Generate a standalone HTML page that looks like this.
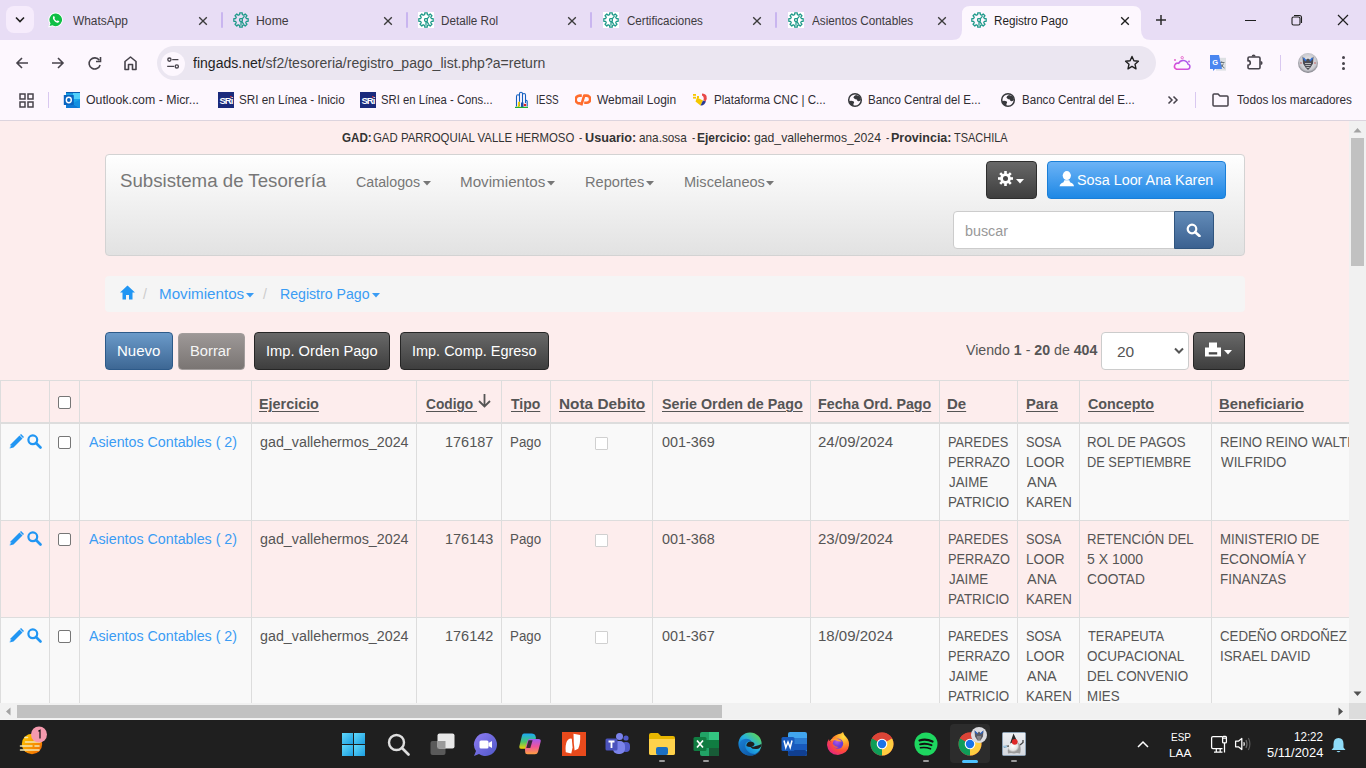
<!DOCTYPE html>
<html><head><meta charset='utf-8'><style>
html,body{margin:0;padding:0;width:1366px;height:768px;overflow:hidden;background:#fdeded;font-family:"Liberation Sans", sans-serif;}
div,svg,span.t{position:absolute;}
span.t{white-space:pre;line-height:normal;}
</style></head><body>
<div style='left:0px;top:0px;width:1366px;height:40px;background:#e8ddf5'></div><div style='left:6px;top:6px;width:28px;height:27px;background:#f6ecfc;border-radius:8px'></div><svg style='position:absolute;left:15px;top:16px;' width='10' height='7' viewBox='0 0 10 7'><path d='M1 1.5 L5 5.5 L9 1.5' fill='none' stroke='#1f1f1f' stroke-width='1.6'/></svg><span class='t' style='left:72.8px;top:14px;font-size:12px;color:#3d3a40;font-weight:400;font-family:"Liberation Sans";transform:scaleX(0.9909);transform-origin:0 0;'>WhatsApp</span><svg style='position:absolute;left:197.8px;top:15.5px;' width='10' height='10' viewBox='0 0 10 10'><path d='M1.2 1.2L8.8 8.8M8.8 1.2L1.2 8.8' stroke='#3b3b3b' stroke-width='1.35'/></svg><div style='left:221px;top:12px;width:2px;height:16px;background:#c9b5ef;border-radius:1px'></div><span class='t' style='left:256.48px;top:14px;font-size:12px;color:#3d3a40;font-weight:400;font-family:"Liberation Sans";transform:scaleX(1.0194);transform-origin:0 0;'>Home</span><svg style='position:absolute;left:382.5px;top:15.5px;' width='10' height='10' viewBox='0 0 10 10'><path d='M1.2 1.2L8.8 8.8M8.8 1.2L1.2 8.8' stroke='#3b3b3b' stroke-width='1.35'/></svg><div style='left:406px;top:12px;width:2px;height:16px;background:#c9b5ef;border-radius:1px'></div><span class='t' style='left:441.23px;top:14px;font-size:12px;color:#3d3a40;font-weight:400;font-family:"Liberation Sans";transform:scaleX(0.9737);transform-origin:0 0;'>Detalle Rol</span><svg style='position:absolute;left:567.2px;top:15.5px;' width='10' height='10' viewBox='0 0 10 10'><path d='M1.2 1.2L8.8 8.8M8.8 1.2L1.2 8.8' stroke='#3b3b3b' stroke-width='1.35'/></svg><div style='left:590px;top:12px;width:2px;height:16px;background:#c9b5ef;border-radius:1px'></div><span class='t' style='left:626.9px;top:14px;font-size:12px;color:#3d3a40;font-weight:400;font-family:"Liberation Sans";transform:scaleX(0.9646);transform-origin:0 0;'>Certificaciones</span><svg style='position:absolute;left:751.9px;top:15.5px;' width='10' height='10' viewBox='0 0 10 10'><path d='M1.2 1.2L8.8 8.8M8.8 1.2L1.2 8.8' stroke='#3b3b3b' stroke-width='1.35'/></svg><div style='left:775px;top:12px;width:2px;height:16px;background:#c9b5ef;border-radius:1px'></div><span class='t' style='left:811.6px;top:14px;font-size:12px;color:#3d3a40;font-weight:400;font-family:"Liberation Sans";transform:scaleX(0.9786);transform-origin:0 0;'>Asientos Contables</span><svg style='position:absolute;left:936.6px;top:15.5px;' width='10' height='10' viewBox='0 0 10 10'><path d='M1.2 1.2L8.8 8.8M8.8 1.2L1.2 8.8' stroke='#3b3b3b' stroke-width='1.35'/></svg><svg style='position:absolute;left:48px;top:12px;' width='16' height='16' viewBox='0 0 16 16'><path d='M8 0.6A7.2 7.2 0 1 1 4.3 14.2L0.2 15.4L1.5 11.6A7.2 7.2 0 0 1 8 0.6Z' fill='#fff'/><path d='M8 1.5A6.3 6.3 0 1 1 4.5 13.2L1.6 14.1L2.5 11.3A6.3 6.3 0 0 1 8 1.5Z' fill='#0fbf45'/><path d='M5.3 4.4c.3-.4.8-.4 1 0l.6 1.3c.1.3-.2.7-.5 1 .5 1 1.3 1.8 2.3 2.3.3-.3.7-.6 1-.5l1.3.6c.4.2.4.7 0 1-.7.7-1.5.8-2.4.4-1.6-.7-2.8-1.9-3.5-3.5-.4-.9-.3-1.8.2-2.6z' fill='#fff'/></svg><svg style='position:absolute;left:233px;top:12px;' width='16' height='16' viewBox='0 0 16 16'><g fill='none' stroke='#1f9a8a' stroke-width='1.25' stroke-linejoin='round'><path d='M5.90 2.92L6.67 2.66L6.73 0.81L9.27 0.81L9.33 2.66L10.10 2.92L10.83 3.29L12.19 2.02L13.98 3.81L12.71 5.17L13.08 5.90L13.34 6.67L15.19 6.73L15.19 9.27L13.34 9.33L13.08 10.10L12.71 10.83L13.98 12.19L12.19 13.98L10.83 12.71L10.10 13.08L9.33 13.34L9.27 15.19L6.73 15.19L6.67 13.34L5.90 13.08L5.17 12.71L3.81 13.98L2.02 12.19L3.29 10.83L2.92 10.10L2.66 9.33L0.81 9.27L0.81 6.73L2.66 6.67L2.92 5.90L3.29 5.17L2.02 3.81L3.81 2.02L5.17 3.29Z'/><rect x='6.6' y='6.6' width='2.8' height='2.8' rx='0.8'/><path d='M9.2 6.8L11.5 4.2M8 9.4V13.4M8.8 9.3L10.6 12.2'/></g></svg><svg style='position:absolute;left:418px;top:12px;' width='16' height='16' viewBox='0 0 16 16'><rect x='0' y='0' width='16' height='16' fill='#fff'/><g fill='none' stroke='#1f9a8a' stroke-width='1.25' stroke-linejoin='round'><path d='M5.90 2.92L6.67 2.66L6.73 0.81L9.27 0.81L9.33 2.66L10.10 2.92L10.83 3.29L12.19 2.02L13.98 3.81L12.71 5.17L13.08 5.90L13.34 6.67L15.19 6.73L15.19 9.27L13.34 9.33L13.08 10.10L12.71 10.83L13.98 12.19L12.19 13.98L10.83 12.71L10.10 13.08L9.33 13.34L9.27 15.19L6.73 15.19L6.67 13.34L5.90 13.08L5.17 12.71L3.81 13.98L2.02 12.19L3.29 10.83L2.92 10.10L2.66 9.33L0.81 9.27L0.81 6.73L2.66 6.67L2.92 5.90L3.29 5.17L2.02 3.81L3.81 2.02L5.17 3.29Z'/><rect x='6.6' y='6.6' width='2.8' height='2.8' rx='0.8'/><path d='M9.2 6.8L11.5 4.2M8 9.4V13.4M8.8 9.3L10.6 12.2'/></g></svg><svg style='position:absolute;left:603px;top:12px;' width='16' height='16' viewBox='0 0 16 16'><rect x='0' y='0' width='16' height='16' fill='#fff'/><g fill='none' stroke='#1f9a8a' stroke-width='1.25' stroke-linejoin='round'><path d='M5.90 2.92L6.67 2.66L6.73 0.81L9.27 0.81L9.33 2.66L10.10 2.92L10.83 3.29L12.19 2.02L13.98 3.81L12.71 5.17L13.08 5.90L13.34 6.67L15.19 6.73L15.19 9.27L13.34 9.33L13.08 10.10L12.71 10.83L13.98 12.19L12.19 13.98L10.83 12.71L10.10 13.08L9.33 13.34L9.27 15.19L6.73 15.19L6.67 13.34L5.90 13.08L5.17 12.71L3.81 13.98L2.02 12.19L3.29 10.83L2.92 10.10L2.66 9.33L0.81 9.27L0.81 6.73L2.66 6.67L2.92 5.90L3.29 5.17L2.02 3.81L3.81 2.02L5.17 3.29Z'/><rect x='6.6' y='6.6' width='2.8' height='2.8' rx='0.8'/><path d='M9.2 6.8L11.5 4.2M8 9.4V13.4M8.8 9.3L10.6 12.2'/></g></svg><svg style='position:absolute;left:788px;top:12px;' width='16' height='16' viewBox='0 0 16 16'><rect x='0' y='0' width='16' height='16' fill='#fff'/><g fill='none' stroke='#1f9a8a' stroke-width='1.25' stroke-linejoin='round'><path d='M5.90 2.92L6.67 2.66L6.73 0.81L9.27 0.81L9.33 2.66L10.10 2.92L10.83 3.29L12.19 2.02L13.98 3.81L12.71 5.17L13.08 5.90L13.34 6.67L15.19 6.73L15.19 9.27L13.34 9.33L13.08 10.10L12.71 10.83L13.98 12.19L12.19 13.98L10.83 12.71L10.10 13.08L9.33 13.34L9.27 15.19L6.73 15.19L6.67 13.34L5.90 13.08L5.17 12.71L3.81 13.98L2.02 12.19L3.29 10.83L2.92 10.10L2.66 9.33L0.81 9.27L0.81 6.73L2.66 6.67L2.92 5.90L3.29 5.17L2.02 3.81L3.81 2.02L5.17 3.29Z'/><rect x='6.6' y='6.6' width='2.8' height='2.8' rx='0.8'/><path d='M9.2 6.8L11.5 4.2M8 9.4V13.4M8.8 9.3L10.6 12.2'/></g></svg><svg style='position:absolute;left:952px;top:6px' width='200' height='34' viewBox='0 0 200 34'><path d='M0 34 Q10 34 10 24 V8 Q10 0 18 0 H181 Q189 0 189 8 V24 Q189 34 199 34 Z' fill='#fdf7fe'/></svg><svg style='position:absolute;left:971px;top:12px;' width='16' height='16' viewBox='0 0 16 16'><g fill='none' stroke='#1f9a8a' stroke-width='1.25' stroke-linejoin='round'><path d='M5.90 2.92L6.67 2.66L6.73 0.81L9.27 0.81L9.33 2.66L10.10 2.92L10.83 3.29L12.19 2.02L13.98 3.81L12.71 5.17L13.08 5.90L13.34 6.67L15.19 6.73L15.19 9.27L13.34 9.33L13.08 10.10L12.71 10.83L13.98 12.19L12.19 13.98L10.83 12.71L10.10 13.08L9.33 13.34L9.27 15.19L6.73 15.19L6.67 13.34L5.90 13.08L5.17 12.71L3.81 13.98L2.02 12.19L3.29 10.83L2.92 10.10L2.66 9.33L0.81 9.27L0.81 6.73L2.66 6.67L2.92 5.90L3.29 5.17L2.02 3.81L3.81 2.02L5.17 3.29Z'/><rect x='6.6' y='6.6' width='2.8' height='2.8' rx='0.8'/><path d='M9.2 6.8L11.5 4.2M8 9.4V13.4M8.8 9.3L10.6 12.2'/></g></svg><span class='t' style='left:994.03px;top:14px;font-size:12px;color:#1f1f1f;font-weight:400;font-family:"Liberation Sans";transform:scaleX(0.9733);transform-origin:0 0;'>Registro Pago</span><svg style='position:absolute;left:1120px;top:15.5px;' width='10' height='10' viewBox='0 0 10 10'><path d='M1.2 1.2L8.8 8.8M8.8 1.2L1.2 8.8' stroke='#1f1f1f' stroke-width='1.35'/></svg><svg style='position:absolute;left:1155px;top:14px;' width='12' height='12' viewBox='0 0 12 12'><path d='M6 1V11M1 6H11' stroke='#2a2a2a' stroke-width='1.5'/></svg><div style='left:1245px;top:20px;width:11px;height:1px;background:#1f1f1f'></div><svg style='position:absolute;left:1291px;top:14px;' width='12' height='12' viewBox='0 0 12 12'><rect x='1' y='3' width='8' height='8' rx='1.5' fill='none' stroke='#1f1f1f' stroke-width='1.1'/><path d='M3 1.5H8.5A2 2 0 0 1 10.5 3.5V9' fill='none' stroke='#1f1f1f' stroke-width='1.1'/></svg><svg style='position:absolute;left:1337px;top:14px;' width='12' height='12' viewBox='0 0 12 12'><path d='M1 1L11 11M11 1L1 11' stroke='#1f1f1f' stroke-width='1.2'/></svg><div style='left:0px;top:40px;width:1366px;height:80px;background:#fdf7fe'></div><svg style='position:absolute;left:15px;top:56px;' width='14' height='14' viewBox='0 0 14 14'><path d='M13 7H2M7 2L2 7L7 12' fill='none' stroke='#47434b' stroke-width='1.6'/></svg><svg style='position:absolute;left:51px;top:56px;' width='14' height='14' viewBox='0 0 14 14'><path d='M1 7H12M7 2L12 7L7 12' fill='none' stroke='#47434b' stroke-width='1.6'/></svg><svg style='position:absolute;left:87px;top:56px;' width='15' height='15' viewBox='0 0 15 15'><path d='M12.3 4.2A5.6 5.6 0 1 0 13.1 9' fill='none' stroke='#47434b' stroke-width='1.6'/><path d='M13.5 1V5.5H9' fill='none' stroke='#47434b' stroke-width='1.6'/></svg><svg style='position:absolute;left:123px;top:55px;' width='15' height='16' viewBox='0 0 15 16'><path d='M2 14.5V6.5L7.5 2L13 6.5V14.5H9.5V9.5H5.5V14.5Z' fill='none' stroke='#47434b' stroke-width='1.6' stroke-linejoin='round'/></svg><div style='left:157px;top:46px;width:999px;height:34px;background:#ebe6f1;border-radius:17px'></div><div style='left:161px;top:52px;width:24px;height:24px;background:#fdf7fe;border-radius:12px'></div><svg style='position:absolute;left:166px;top:57px;' width='14' height='12' viewBox='0 0 14 12'><g fill='none' stroke='#47434b' stroke-width='1.35'><circle cx='3.4' cy='2.6' r='1.6'/><path d='M6.2 2.6H12.4M1.2 9.4H8.2'/><circle cx='10.8' cy='9.4' r='1.6'/></g></svg><span class='t' style='left:193.0px;top:55px;font-size:14px;color:#1f1f1f;font-weight:400;font-family:"Liberation Sans";transform:scaleX(1.0028);transform-origin:0 0;'><span style='color:#1f1f1f'>fingads.net</span><span style='color:#474747'>/sf2/tesoreria/registro_pago_list.php?a=return</span></span><svg style='position:absolute;left:1124px;top:55px;' width='16' height='16' viewBox='0 0 16 16'><path d='M8 1.5L9.9 5.8L14.4 6.2L11 9.2L12 13.8L8 11.4L4 13.8L5 9.2L1.6 6.2L6.1 5.8Z' fill='none' stroke='#1f1f1f' stroke-width='1.4' stroke-linejoin='round'/></svg><svg style='position:absolute;left:1172px;top:54px;' width='20' height='17' viewBox='0 0 20 17'><defs><linearGradient id='cg' x1='0' y1='1' x2='1' y2='0'><stop offset='0' stop-color='#e84ccf'/><stop offset='1' stop-color='#9d5cf2'/></linearGradient></defs><path d='M4.5 15.2H15.5A2.6 2.6 0 0 0 16 10.1A5 5 0 0 0 6.6 9.4A3 3 0 0 0 4.5 15.2Z' fill='none' stroke='url(#cg)' stroke-width='1.5'/><circle cx='10.2' cy='3.7' r='1.2' fill='none' stroke='#e45fc8' stroke-width='0.9'/><circle cx='3' cy='6' r='0.9' fill='#e255c8'/><circle cx='17' cy='7.5' r='0.9' fill='#c058e0'/></svg><svg style='position:absolute;left:1210px;top:55px;' width='17' height='16' viewBox='0 0 17 16'><rect x='6' y='2.8' width='10' height='12.8' fill='#dde0e3'/><path d='M9 7.5h5.5M11.7 6.3v1.2M10.3 8.6q1.5 3 4.3 4.5M13.4 8.6q-.9 3.2-3.6 4.6' stroke='#5f6b73' stroke-width='0.9' fill='none'/><path d='M0 0H9L12 14H5L3 16V14H0Z' fill='#4a86f0'/><text x='5.2' y='9.6' font-size='7.5' font-weight='700' fill='#fff' text-anchor='middle' font-family='Liberation Sans'>G</text></svg><svg style='position:absolute;left:1246px;top:54px;' width='18' height='17' viewBox='0 0 18 17'><path d='M3.2 3H12.8Q14 3 14 4.2V13.6Q14 14.8 12.8 14.8H3.2Q2 14.8 2 13.6V11.2A2.3 2.3 0 0 0 2 6.6V4.2Q2 3 3.2 3Z' fill='none' stroke='#47434b' stroke-width='1.6'/><path d='M5.6 2.6A2 2 0 0 1 9.6 2.6Z M14.6 6.9A2 2 0 0 1 14.6 10.9Z' fill='#47434b'/></svg><div style='left:1280px;top:55px;width:1px;height:16px;background:#d9c8f0'></div><svg style='position:absolute;left:1298px;top:53px;' width='20' height='20' viewBox='0 0 20 20'><defs><radialGradient id='av' cx='.5' cy='.45' r='.55'><stop offset='0' stop-color='#f2f2f4'/><stop offset='.75' stop-color='#c9c9cf'/><stop offset='1' stop-color='#7a7a82'/></radialGradient></defs><circle cx='10' cy='10' r='10' fill='url(#av)'/><path d='M4.5 3.5L7.5 7L10 5.5L12.5 7L15.5 3.5L15 10.5L12.5 14.5L10 17L7.5 14.5L5 10.5Z' fill='#4a4a52'/><path d='M5.5 5L8 8M14.5 5L12 8' stroke='#2f6fd8' stroke-width='1.6'/><path d='M7 10.5H13M7.5 12.5H12.5M8.5 14.5H11.5' stroke='#e8e8e8' stroke-width='0.7'/><circle cx='3' cy='10' r='0.7' fill='#c04040'/><circle cx='17' cy='10' r='0.7' fill='#c04040'/></svg><div style='left:1342px;top:56px;width:3px;height:3px;background:#47434b;border-radius:2px'></div><div style='left:1342px;top:62px;width:3px;height:3px;background:#47434b;border-radius:2px'></div><div style='left:1342px;top:67px;width:3px;height:3px;background:#47434b;border-radius:2px'></div><svg style='position:absolute;left:19px;top:93px;' width='15' height='15' viewBox='0 0 15 15'><g fill='none' stroke='#47434b' stroke-width='1.5'><rect x='1' y='1' width='5' height='5'/><rect x='9' y='1' width='5' height='5'/><rect x='1' y='9' width='5' height='5'/><rect x='9' y='9' width='5' height='5'/></g></svg><div style='left:48px;top:92px;width:1px;height:16px;background:#d9c8f0'></div><svg style='position:absolute;left:63px;top:91px;' width='18' height='18' viewBox='0 0 18 18'><rect x='3' y='1' width='14' height='16' fill='#1aa3e8'/><rect x='3' y='1' width='14' height='1.2' fill='#0a5cb0'/><rect x='10' y='2' width='7' height='6' fill='#50d0fa'/><path d='M3 9.5L17 17H3Z' fill='#0f78d4'/><path d='M17 8.5V17L9.5 12.5Z' fill='#1490e0'/><rect x='0.8' y='4' width='10' height='10' rx='0.6' fill='#0a64c0'/><ellipse cx='5.8' cy='9' rx='2.5' ry='2.7' fill='none' stroke='#fff' stroke-width='1.4'/></svg><span class='t' style='left:86.0px;top:93px;font-size:12px;color:#2f2c33;font-weight:400;font-family:"Liberation Sans";transform:scaleX(1.0275);transform-origin:0 0;'>Outlook.com - Micr...</span><svg style='position:absolute;left:218px;top:92px;' width='16' height='16' viewBox='0 0 16 16'><rect width='16' height='16' fill='#1a2a7c'/><text x='8' y='12' font-size='9.5' font-weight='700' fill='#fff' text-anchor='middle' font-family='Liberation Sans' letter-spacing='-0.9'>SRi</text><rect x='12.2' y='4' width='1.4' height='1.4' fill='#e03030'/></svg><svg style='position:absolute;left:360px;top:92px;' width='16' height='16' viewBox='0 0 16 16'><rect width='16' height='16' fill='#1a2a7c'/><text x='8' y='12' font-size='9.5' font-weight='700' fill='#fff' text-anchor='middle' font-family='Liberation Sans' letter-spacing='-0.9'>SRi</text><rect x='12.2' y='4' width='1.4' height='1.4' fill='#e03030'/></svg><span class='t' style='left:239.03px;top:93px;font-size:12px;color:#2f2c33;font-weight:400;font-family:"Liberation Sans";transform:scaleX(0.9720);transform-origin:0 0;'>SRI en Línea - Inicio</span><span class='t' style='left:381.06px;top:93px;font-size:12px;color:#2f2c33;font-weight:400;font-family:"Liberation Sans";transform:scaleX(0.9402);transform-origin:0 0;'>SRI en Línea - Cons...</span><svg style='position:absolute;left:515px;top:91px;' width='13' height='17' viewBox='0 0 13 17'><path d='M1.5 15.5V5.5Q1.5 3.8 3 3.8Q4.5 3.8 4.5 5.5V15 M4.5 5V2.8Q4.5 1.2 6 1.2Q7.5 1.2 7.5 2.8V12 M7.5 4Q7.5 2.5 9 2.5Q10.5 2.5 10.5 4V12 M10.5 10.5Q10.5 9.2 11.3 9.2Q12.2 9.2 12.2 10.5V15.5' fill='none' stroke='#1560c0' stroke-width='1.1'/><path d='M3 11L5 10.5L4.5 16H2.8Z' fill='#f5d000'/><path d='M6 11.5H8.5V16H6Z' fill='#1e50b0'/><circle cx='10' cy='14' r='1.3' fill='#e02020'/><rect x='0' y='15.8' width='13' height='1.2' fill='#22b030'/></svg><span class='t' style='left:536.17px;top:93px;font-size:12px;color:#2f2c33;font-weight:400;font-family:"Liberation Sans";transform:scaleX(0.8269);transform-origin:0 0;'>IESS</span><svg style='position:absolute;left:575px;top:93px;' width='16' height='13' viewBox='0 0 16 13'><path d='M6.8 2.6H4.6A3.9 3.9 0 0 0 4.6 10.4H5.8' fill='none' stroke='#ff6c2c' stroke-width='2.6'/><path d='M6.2 12.4L9.2 2.6H11.6A3.6 3.6 0 0 1 11.6 9.8H9.2' fill='none' stroke='#ff6c2c' stroke-width='2.6' stroke-linejoin='round'/></svg><span class='t' style='left:597.0px;top:93px;font-size:12px;color:#2f2c33;font-weight:400;font-family:"Liberation Sans";'>Webmail Login</span><svg style='position:absolute;left:692px;top:92px;' width='17' height='15' viewBox='0 0 17 15'><g fill='#f5c800'><rect x='1' y='2' width='3' height='1.8'/><rect x='1' y='4.8' width='3' height='1.8'/><rect x='5' y='4' width='2' height='2'/><path d='M5 5.5L11 8.5L8.5 13.5L3.5 9.5Z'/></g><path d='M10 1.5Q13.5 1.5 14.5 4Q15.5 7 13.5 9.5L11.5 8Q12.5 5 10 3.5Z' fill='#e84848'/><path d='M8.5 13.5L11 8.5L14 9.5L12.5 12Q10.5 14 8.5 13.5Z' fill='#2a3a90'/></svg><span class='t' style='left:714.04px;top:93px;font-size:12px;color:#2f2c33;font-weight:400;font-family:"Liberation Sans";transform:scaleX(0.9649);transform-origin:0 0;'>Plataforma CNC | C...</span><svg style='position:absolute;left:847px;top:92px;' width='16' height='16' viewBox='0 0 16 16'><circle cx='8' cy='8' r='6.3' fill='none' stroke='#37383c' stroke-width='1.5'/><path d='M6.4 5.6Q6.8 3.8 9 3L12.6 4.2L14 7.6Q13.2 9.6 11.3 9.3Q9.9 8.9 10 7.4Q8 7.8 6.4 5.6Z M1.8 9.2Q4.3 8.4 6.8 9.4Q7.6 10.4 6.6 11.4Q6 12.8 6.9 14.2L4 13Z' fill='#37383c'/></svg><span class='t' style='left:868.03px;top:93px;font-size:12px;color:#2f2c33;font-weight:400;font-family:"Liberation Sans";transform:scaleX(0.9652);transform-origin:0 0;'>Banco Central del E...</span><svg style='position:absolute;left:1000px;top:92px;' width='16' height='16' viewBox='0 0 16 16'><circle cx='8' cy='8' r='6.3' fill='none' stroke='#37383c' stroke-width='1.5'/><path d='M6.4 5.6Q6.8 3.8 9 3L12.6 4.2L14 7.6Q13.2 9.6 11.3 9.3Q9.9 8.9 10 7.4Q8 7.8 6.4 5.6Z M1.8 9.2Q4.3 8.4 6.8 9.4Q7.6 10.4 6.6 11.4Q6 12.8 6.9 14.2L4 13Z' fill='#37383c'/></svg><span class='t' style='left:1022.03px;top:93px;font-size:12px;color:#2f2c33;font-weight:400;font-family:"Liberation Sans";transform:scaleX(0.9652);transform-origin:0 0;'>Banco Central del E...</span><svg style='position:absolute;left:1167px;top:95px;' width='12' height='10' viewBox='0 0 12 10'><path d='M1.5 1.5L5 5L1.5 8.5M6.5 1.5L10 5L6.5 8.5' fill='none' stroke='#47434b' stroke-width='1.5'/></svg><div style='left:1195px;top:92px;width:1px;height:16px;background:#d9c8f0'></div><svg style='position:absolute;left:1212px;top:93px;' width='17' height='14' viewBox='0 0 17 14'><path d='M1 2Q1 1 2 1H6L8 3H15Q16 3 16 4V12Q16 13 15 13H2Q1 13 1 12Z' fill='none' stroke='#47434b' stroke-width='1.5'/></svg><span class='t' style='left:1237.0px;top:93px;font-size:12px;color:#2f2c33;font-weight:400;font-family:"Liberation Sans";transform:scaleX(0.9786);transform-origin:0 0;'>Todos los marcadores</span><div style='left:0px;top:120px;width:1366px;height:1px;background:#dcd4de'></div><div style='left:0px;top:121px;width:1349px;height:582px;background:#fdeded'></div><span class='t' style='left:341.5px;top:130px;font-size:13px;color:#333;font-weight:700;font-family:"Liberation Sans";transform:scaleX(0.8938);transform-origin:0 0;'>GAD:</span><span class='t' style='left:373.12px;top:130px;font-size:13px;color:#333;font-weight:400;font-family:"Liberation Sans";transform:scaleX(0.8772);transform-origin:0 0;'>GAD PARROQUIAL VALLE HERMOSO</span><span class='t' style='left:578.8px;top:130px;font-size:13px;color:#333;font-weight:400;font-family:"Liberation Sans";transform:scaleX(0.7500);transform-origin:0 0;'>-</span><span class='t' style='left:584.83px;top:130px;font-size:13px;color:#333;font-weight:700;font-family:"Liberation Sans";transform:scaleX(0.9725);transform-origin:0 0;'>Usuario:</span><span class='t' style='left:639.0px;top:130px;font-size:13px;color:#333;font-weight:400;font-family:"Liberation Sans";transform:scaleX(0.9057);transform-origin:0 0;'>ana.sosa</span><span class='t' style='left:691.6px;top:130px;font-size:13px;color:#333;font-weight:400;font-family:"Liberation Sans";transform:scaleX(0.7500);transform-origin:0 0;'>-</span><span class='t' style='left:697.38px;top:130px;font-size:13px;color:#333;font-weight:700;font-family:"Liberation Sans";transform:scaleX(0.9193);transform-origin:0 0;'>Ejercicio:</span><span class='t' style='left:754.2px;top:130px;font-size:13px;color:#333;font-weight:400;font-family:"Liberation Sans";transform:scaleX(0.9393);transform-origin:0 0;'>gad_vallehermos_2024</span><span class='t' style='left:885.6px;top:130px;font-size:13px;color:#333;font-weight:400;font-family:"Liberation Sans";transform:scaleX(0.7500);transform-origin:0 0;'>-</span><span class='t' style='left:891.04px;top:130px;font-size:13px;color:#333;font-weight:700;font-family:"Liberation Sans";transform:scaleX(0.9623);transform-origin:0 0;'>Provincia:</span><span class='t' style='left:954.0px;top:130px;font-size:13px;color:#333;font-weight:400;font-family:"Liberation Sans";transform:scaleX(0.8438);transform-origin:0 0;'>TSACHILA</span><div style='left:105px;top:154px;width:1138px;height:100px;border:1px solid #d3d3d3;border-radius:4px;background:linear-gradient(#ffffff 0%,#fcfcfc 8%,#e2e2e2 100%);box-shadow:inset 0 1px 0 rgba(255,255,255,.8)'></div><span class='t' style='left:119.96px;top:171px;font-size:18px;color:#777;font-weight:400;font-family:"Liberation Sans";transform:scaleX(1.0374);transform-origin:0 0;'>Subsistema de Tesorería</span><span class='t' style='left:355.98px;top:174px;font-size:14px;color:#777;font-weight:400;font-family:"Liberation Sans";transform:scaleX(1.0177);transform-origin:0 0;'>Catalogos</span><span class='t' style='left:459.91px;top:174px;font-size:14px;color:#777;font-weight:400;font-family:"Liberation Sans";transform:scaleX(1.0857);transform-origin:0 0;'>Movimientos</span><span class='t' style='left:584.86px;top:174px;font-size:14px;color:#777;font-weight:400;font-family:"Liberation Sans";transform:scaleX(1.0436);transform-origin:0 0;'>Reportes</span><span class='t' style='left:683.76px;top:174px;font-size:14px;color:#777;font-weight:400;font-family:"Liberation Sans";transform:scaleX(1.0395);transform-origin:0 0;'>Miscelaneos</span><svg style='position:absolute;left:423px;top:181px;' width='9' height='5' viewBox='0 0 9 5'><path d='M0 0H8L4 4.5Z' fill='#777'/></svg><svg style='position:absolute;left:547px;top:181px;' width='9' height='5' viewBox='0 0 9 5'><path d='M0 0H8L4 4.5Z' fill='#777'/></svg><svg style='position:absolute;left:646px;top:181px;' width='9' height='5' viewBox='0 0 9 5'><path d='M0 0H8L4 4.5Z' fill='#777'/></svg><svg style='position:absolute;left:766px;top:181px;' width='9' height='5' viewBox='0 0 9 5'><path d='M0 0H8L4 4.5Z' fill='#777'/></svg><div style='left:986px;top:161px;width:49px;height:36px;border:1px solid #2e2e2e;border-radius:4px;background:linear-gradient(#686868,#3e3e3e)'></div><svg style='position:absolute;left:998px;top:171px;' width='15' height='15' viewBox='0 0 15 15'><g fill='#fff'><circle cx='7.5' cy='7.5' r='5.3'/><rect x='6.2' y='0' width='2.6' height='15'/><rect x='6.2' y='0' width='2.6' height='15' transform='rotate(45 7.5 7.5)'/><rect x='6.2' y='0' width='2.6' height='15' transform='rotate(90 7.5 7.5)'/><rect x='6.2' y='0' width='2.6' height='15' transform='rotate(135 7.5 7.5)'/></g><circle cx='7.5' cy='7.5' r='2.5' fill='#4a4a4a'/></svg><svg style='position:absolute;left:1016px;top:179px;' width='9' height='5' viewBox='0 0 9 5'><path d='M0 0H8L4 4.5Z' fill='#fff'/></svg><div style='left:1047px;top:161px;width:177px;height:36px;border:1px solid #1a7fd8;border-radius:4px;background:linear-gradient(#6cb3f6,#1e88e5)'></div><svg style='position:absolute;left:1059px;top:171px;' width='16' height='16' viewBox='0 0 16 16'><ellipse cx='7.8' cy='4.6' rx='4.1' ry='4.5' fill='#fff'/><path d='M0.5 15.2L1.2 13.5Q2 12 4.5 11.2L5.3 9.2H10.3L11.1 11.2Q13.6 12 14.4 13.5L15.1 15.2Z' fill='#fff'/></svg><span class='t' style='left:1076.98px;top:172px;font-size:14px;color:#fff;font-weight:400;font-family:"Liberation Sans";transform:scaleX(1.0244);transform-origin:0 0;'>Sosa Loor Ana Karen</span><div style='left:953px;top:211px;width:220px;height:36px;border:1px solid #cccccc;border-radius:4px 0 0 4px;background:#fff'></div><span class='t' style='left:964.98px;top:223px;font-size:14px;color:#999;font-weight:400;font-family:"Liberation Sans";transform:scaleX(1.0244);transform-origin:0 0;'>buscar</span><div style='left:1174px;top:211px;width:38px;height:36px;border:1px solid #30557f;border-radius:0 4px 4px 0;background:linear-gradient(#628bb8,#3b6190)'></div><svg style='position:absolute;left:1186px;top:223px;' width='16' height='14' viewBox='0 0 16 14'><circle cx='6' cy='6' r='4.3' fill='none' stroke='#fff' stroke-width='2.2'/><path d='M9 9L13.5 13' stroke='#fff' stroke-width='2.6' stroke-linecap='round'/></svg><div style='left:105px;top:276px;width:1140px;height:36px;background:#f5f5f5;border-radius:4px'></div><svg style='position:absolute;left:120px;top:285px;' width='15' height='15' viewBox='0 0 15 15'><path d='M7.5 0.5L15 7.5H12.5V14.5H9V10H6V14.5H2.5V7.5H0Z' fill='#2196f3'/></svg><span class='t' style='left:143px;top:286px;font-size:14px;color:#ccc;font-weight:400;font-family:"Liberation Sans";'>/</span><span class='t' style='left:159.42px;top:286px;font-size:14px;color:#3a9cf4;font-weight:400;font-family:"Liberation Sans";transform:scaleX(1.0844);transform-origin:0 0;'>Movimientos</span><svg style='position:absolute;left:246px;top:293px;' width='9' height='5' viewBox='0 0 9 5'><path d='M0 0H8L4 4.5Z' fill='#3a9cf4'/></svg><span class='t' style='left:263px;top:286px;font-size:14px;color:#ccc;font-weight:400;font-family:"Liberation Sans";'>/</span><span class='t' style='left:280.49px;top:286px;font-size:14px;color:#3a9cf4;font-weight:400;font-family:"Liberation Sans";transform:scaleX(1.0092);transform-origin:0 0;'>Registro Pago</span><svg style='position:absolute;left:372px;top:293px;' width='9' height='5' viewBox='0 0 9 5'><path d='M0 0H8L4 4.5Z' fill='#3a9cf4'/></svg><div style='left:105px;top:332px;width:66px;height:36px;border:1px solid #2d5a89;border-radius:4px;background:linear-gradient(#6b9ac9,#3d6794)'></div><span class='t' style='left:116.93px;top:343px;font-size:14px;color:#fff;font-weight:400;font-family:"Liberation Sans";transform:scaleX(1.0718);transform-origin:0 0;'>Nuevo</span><div style='left:178px;top:333px;width:65px;height:35px;border:1px solid #a29d9c;border-radius:4px;background:linear-gradient(#9d9897,#7a7573)'></div><span class='t' style='left:189.95px;top:343px;font-size:14px;color:#f5f5f5;font-weight:400;font-family:"Liberation Sans";transform:scaleX(1.0526);transform-origin:0 0;'>Borrar</span><div style='left:254px;top:332px;width:134px;height:36px;border:1px solid #262626;border-radius:4px;background:linear-gradient(#686868,#3e3e3e)'></div><span class='t' style='left:265.95px;top:343px;font-size:14px;color:#fff;font-weight:400;font-family:"Liberation Sans";transform:scaleX(1.0476);transform-origin:0 0;'>Imp. Orden Pago</span><div style='left:400px;top:332px;width:147px;height:36px;border:1px solid #262626;border-radius:4px;background:linear-gradient(#686868,#3e3e3e)'></div><span class='t' style='left:411.97px;top:343px;font-size:14px;color:#fff;font-weight:400;font-family:"Liberation Sans";transform:scaleX(1.0336);transform-origin:0 0;'>Imp. Comp. Egreso</span><span class='t' style='left:965.5px;top:342px;font-size:14px;color:#555;font-weight:400;font-family:"Liberation Sans";transform:scaleX(1.0123);transform-origin:0 0;'>Viendo <b>1</b> - <b>20</b> de <b>404</b></span><div style='left:1101px;top:332px;width:86px;height:36px;border:1px solid #ccc;border-radius:4px;background:#fff'></div><span class='t' style='left:1117.39px;top:344px;font-size:14px;color:#555;font-weight:400;font-family:"Liberation Sans";transform:scaleX(1.1071);transform-origin:0 0;'>20</span><svg style='position:absolute;left:1174px;top:347px;' width='10' height='8' viewBox='0 0 10 8'><path d='M1 1.5L5 5.5L9 1.5' fill='none' stroke='#555' stroke-width='2'/></svg><div style='left:1193px;top:332px;width:50px;height:36px;border:1px solid #262626;border-radius:4px;background:linear-gradient(#686868,#3e3e3e)'></div><svg style='position:absolute;left:1205px;top:342px;' width='16' height='15' viewBox='0 0 16 15'><rect x='4' y='0.5' width='8' height='5.5' fill='#fff'/><rect x='0' y='5.5' width='16' height='9' fill='#fff'/><rect x='3.8' y='10.2' width='8.4' height='2.3' fill='#474747'/><rect x='0' y='11' width='1' height='3.5' fill='#4a4a4a' opacity='.0'/></svg><svg style='position:absolute;left:1224px;top:350px;' width='9' height='5' viewBox='0 0 9 5'><path d='M0 0H8L4 4.5Z' fill='#fff'/></svg><div style='left:0px;top:424px;width:1349px;height:96px;background:#f9f9f9'></div><div style='left:0px;top:618px;width:1349px;height:96px;background:#f9f9f9'></div><div style='left:0px;top:380px;width:1349px;height:1px;background:#dddddd'></div><div style='left:0px;top:422px;width:1349px;height:2px;background:#dddddd'></div><div style='left:0px;top:520px;width:1349px;height:1px;background:#dddddd'></div><div style='left:0px;top:617px;width:1349px;height:1px;background:#dddddd'></div><div style='left:0px;top:380px;width:1px;height:323px;background:#dddddd'></div><div style='left:49px;top:380px;width:1px;height:323px;background:#dddddd'></div><div style='left:79px;top:380px;width:1px;height:323px;background:#dddddd'></div><div style='left:251px;top:380px;width:1px;height:323px;background:#dddddd'></div><div style='left:416px;top:380px;width:1px;height:323px;background:#dddddd'></div><div style='left:501px;top:380px;width:1px;height:323px;background:#dddddd'></div><div style='left:550px;top:380px;width:1px;height:323px;background:#dddddd'></div><div style='left:652px;top:380px;width:1px;height:323px;background:#dddddd'></div><div style='left:810px;top:380px;width:1px;height:323px;background:#dddddd'></div><div style='left:939px;top:380px;width:1px;height:323px;background:#dddddd'></div><div style='left:1017px;top:380px;width:1px;height:323px;background:#dddddd'></div><div style='left:1079px;top:380px;width:1px;height:323px;background:#dddddd'></div><div style='left:1211px;top:380px;width:1px;height:323px;background:#dddddd'></div><div style='left:58px;top:396px;width:11px;height:11px;border:1px solid #767676;border-radius:2px;background:#fff'></div><span class='t' style='left:258.97px;top:396px;font-size:14px;color:#555555;font-weight:700;font-family:"Liberation Sans";transform:scaleX(1.0263);transform-origin:0 0;text-decoration:underline;text-underline-offset:2px;'>Ejercicio</span><span class='t' style='left:425.5px;top:396px;font-size:14px;color:#555555;font-weight:700;font-family:"Liberation Sans";transform:scaleX(0.9792);transform-origin:0 0;text-decoration:underline;text-underline-offset:2px;'>Codigo </span><span class='t' style='left:511.0px;top:396px;font-size:14px;color:#555555;font-weight:700;font-family:"Liberation Sans";text-decoration:underline;text-underline-offset:2px;'>Tipo</span><span class='t' style='left:558.9px;top:396px;font-size:14px;color:#555555;font-weight:700;font-family:"Liberation Sans";transform:scaleX(1.0974);transform-origin:0 0;text-decoration:underline;text-underline-offset:2px;'>Nota Debito</span><span class='t' style='left:661.5px;top:396px;font-size:14px;color:#555555;font-weight:700;font-family:"Liberation Sans";transform:scaleX(1.0219);transform-origin:0 0;text-decoration:underline;text-underline-offset:2px;'>Serie Orden de Pago</span><span class='t' style='left:817.98px;top:396px;font-size:14px;color:#555555;font-weight:700;font-family:"Liberation Sans";transform:scaleX(1.0182);transform-origin:0 0;text-decoration:underline;text-underline-offset:2px;'>Fecha Ord. Pago</span><span class='t' style='left:947.43px;top:396px;font-size:14px;color:#555555;font-weight:700;font-family:"Liberation Sans";transform:scaleX(1.0706);transform-origin:0 0;text-decoration:underline;text-underline-offset:2px;'>De</span><span class='t' style='left:1025.95px;top:396px;font-size:14px;color:#555555;font-weight:700;font-family:"Liberation Sans";transform:scaleX(1.0500);transform-origin:0 0;text-decoration:underline;text-underline-offset:2px;'>Para</span><span class='t' style='left:1088.0px;top:396px;font-size:14px;color:#555555;font-weight:700;font-family:"Liberation Sans";transform:scaleX(1.0234);transform-origin:0 0;text-decoration:underline;text-underline-offset:2px;'>Concepto</span><span class='t' style='left:1219.44px;top:396px;font-size:14px;color:#555555;font-weight:700;font-family:"Liberation Sans";transform:scaleX(1.0595);transform-origin:0 0;text-decoration:underline;text-underline-offset:2px;'>Beneficiario</span><svg style='position:absolute;left:477px;top:393px;' width='15' height='15' viewBox='0 0 15 15'><path d='M7.5 1V13.5M2 8L7.5 13.5L13 8' fill='none' stroke='#555555' stroke-width='1.8'/></svg><svg style='position:absolute;left:9px;top:434px;' width='15' height='15' viewBox='0 0 15 15'><path d='M0.5 14.5L1.5 10.5L10.5 1.5L13.5 4.5L4.5 13.5Z' fill='#2196f3'/><path d='M11.5 0.5L14.5 3.5' stroke='#2196f3' stroke-width='1.5'/><path d='M0.5 14.5L2 11' stroke='#fff' stroke-width='0.6'/></svg><svg style='position:absolute;left:27px;top:434px;' width='15' height='15' viewBox='0 0 15 15'><circle cx='5.8' cy='5.8' r='4.4' fill='none' stroke='#2196f3' stroke-width='2.2'/><path d='M9 9L13.5 13.5' stroke='#2196f3' stroke-width='2.6' stroke-linecap='round'/></svg><div style='left:58px;top:436px;width:11px;height:11px;border:1px solid #767676;border-radius:2px;background:#fff'></div><span class='t' style='left:88.5px;top:434px;font-size:14px;color:#3a9cf4;font-weight:400;font-family:"Liberation Sans";transform:scaleX(1.0172);transform-origin:0 0;'>Asientos Contables ( 2)</span><span class='t' style='left:260.0px;top:434px;font-size:14px;color:#555555;font-weight:400;font-family:"Liberation Sans";transform:scaleX(1.0207);transform-origin:0 0;'>gad_vallehermos_2024</span><span class='t' style='left:445.47px;top:434px;font-size:14px;color:#555555;font-weight:400;font-family:"Liberation Sans";transform:scaleX(1.0333);transform-origin:0 0;'>176187</span><span class='t' style='left:510.05px;top:434px;font-size:14px;color:#555555;font-weight:400;font-family:"Liberation Sans";transform:scaleX(0.9516);transform-origin:0 0;'>Pago</span><div style='left:595px;top:437px;width:11px;height:11px;border:1px solid #d0d0d0;border-radius:1px;background:#fff'></div><span class='t' style='left:661.5px;top:434px;font-size:14px;color:#555555;font-weight:400;font-family:"Liberation Sans";transform:scaleX(1.0294);transform-origin:0 0;'>001-369</span><span class='t' style='left:817.93px;top:434px;font-size:14px;color:#555555;font-weight:400;font-family:"Liberation Sans";transform:scaleX(1.0725);transform-origin:0 0;'>24/09/2024</span><span class='t' style='left:947.59px;top:434px;font-size:14px;color:#555555;font-weight:400;font-family:"Liberation Sans";transform:scaleX(0.9141);transform-origin:0 0;'>PAREDES</span><span class='t' style='left:947.59px;top:454px;font-size:14px;color:#555555;font-weight:400;font-family:"Liberation Sans";transform:scaleX(0.9136);transform-origin:0 0;'>PERRAZO</span><span class='t' style='left:948.5px;top:474px;font-size:14px;color:#555555;font-weight:400;font-family:"Liberation Sans";transform:scaleX(0.9512);transform-origin:0 0;'>JAIME</span><span class='t' style='left:947.54px;top:494px;font-size:14px;color:#555555;font-weight:400;font-family:"Liberation Sans";transform:scaleX(0.9571);transform-origin:0 0;'>PATRICIO</span><span class='t' style='left:1026.09px;top:434px;font-size:14px;color:#555555;font-weight:400;font-family:"Liberation Sans";transform:scaleX(0.9079);transform-origin:0 0;'>SOSA</span><span class='t' style='left:1026.03px;top:454px;font-size:14px;color:#555555;font-weight:400;font-family:"Liberation Sans";transform:scaleX(0.9737);transform-origin:0 0;'>LOOR</span><span class='t' style='left:1027.0px;top:474px;font-size:14px;color:#555555;font-weight:400;font-family:"Liberation Sans";transform:scaleX(1.0345);transform-origin:0 0;'>ANA</span><span class='t' style='left:1026.05px;top:494px;font-size:14px;color:#555555;font-weight:400;font-family:"Liberation Sans";transform:scaleX(0.9478);transform-origin:0 0;'>KAREN</span><span class='t' style='left:1087.05px;top:434px;font-size:14px;color:#555555;font-weight:400;font-family:"Liberation Sans";transform:scaleX(0.9466);transform-origin:0 0;'>ROL DE PAGOS</span><span class='t' style='left:1087.08px;top:454px;font-size:14px;color:#555555;font-weight:400;font-family:"Liberation Sans";transform:scaleX(0.9152);transform-origin:0 0;'>DE SEPTIEMBRE</span><span class='t' style='left:1219.55px;top:434px;font-size:14px;color:#555555;font-weight:400;font-family:"Liberation Sans";transform:scaleX(0.9503);transform-origin:0 0;'>REINO REINO WALTER</span><span class='t' style='left:1220.5px;top:454px;font-size:14px;color:#555555;font-weight:400;font-family:"Liberation Sans";transform:scaleX(0.9559);transform-origin:0 0;'>WILFRIDO</span><svg style='position:absolute;left:9px;top:531px;' width='15' height='15' viewBox='0 0 15 15'><path d='M0.5 14.5L1.5 10.5L10.5 1.5L13.5 4.5L4.5 13.5Z' fill='#2196f3'/><path d='M11.5 0.5L14.5 3.5' stroke='#2196f3' stroke-width='1.5'/><path d='M0.5 14.5L2 11' stroke='#fff' stroke-width='0.6'/></svg><svg style='position:absolute;left:27px;top:531px;' width='15' height='15' viewBox='0 0 15 15'><circle cx='5.8' cy='5.8' r='4.4' fill='none' stroke='#2196f3' stroke-width='2.2'/><path d='M9 9L13.5 13.5' stroke='#2196f3' stroke-width='2.6' stroke-linecap='round'/></svg><div style='left:58px;top:533px;width:11px;height:11px;border:1px solid #767676;border-radius:2px;background:#fff'></div><span class='t' style='left:88.5px;top:531px;font-size:14px;color:#3a9cf4;font-weight:400;font-family:"Liberation Sans";transform:scaleX(1.0172);transform-origin:0 0;'>Asientos Contables ( 2)</span><span class='t' style='left:260.0px;top:531px;font-size:14px;color:#555555;font-weight:400;font-family:"Liberation Sans";transform:scaleX(1.0207);transform-origin:0 0;'>gad_vallehermos_2024</span><span class='t' style='left:445.47px;top:531px;font-size:14px;color:#555555;font-weight:400;font-family:"Liberation Sans";transform:scaleX(1.0333);transform-origin:0 0;'>176143</span><span class='t' style='left:510.05px;top:531px;font-size:14px;color:#555555;font-weight:400;font-family:"Liberation Sans";transform:scaleX(0.9516);transform-origin:0 0;'>Pago</span><div style='left:595px;top:534px;width:11px;height:11px;border:1px solid #d0d0d0;border-radius:1px;background:#fff'></div><span class='t' style='left:661.5px;top:531px;font-size:14px;color:#555555;font-weight:400;font-family:"Liberation Sans";transform:scaleX(1.0294);transform-origin:0 0;'>001-368</span><span class='t' style='left:817.93px;top:531px;font-size:14px;color:#555555;font-weight:400;font-family:"Liberation Sans";transform:scaleX(1.0725);transform-origin:0 0;'>23/09/2024</span><span class='t' style='left:947.59px;top:531px;font-size:14px;color:#555555;font-weight:400;font-family:"Liberation Sans";transform:scaleX(0.9141);transform-origin:0 0;'>PAREDES</span><span class='t' style='left:947.59px;top:551px;font-size:14px;color:#555555;font-weight:400;font-family:"Liberation Sans";transform:scaleX(0.9136);transform-origin:0 0;'>PERRAZO</span><span class='t' style='left:948.5px;top:571px;font-size:14px;color:#555555;font-weight:400;font-family:"Liberation Sans";transform:scaleX(0.9512);transform-origin:0 0;'>JAIME</span><span class='t' style='left:947.54px;top:591px;font-size:14px;color:#555555;font-weight:400;font-family:"Liberation Sans";transform:scaleX(0.9571);transform-origin:0 0;'>PATRICIO</span><span class='t' style='left:1026.09px;top:531px;font-size:14px;color:#555555;font-weight:400;font-family:"Liberation Sans";transform:scaleX(0.9079);transform-origin:0 0;'>SOSA</span><span class='t' style='left:1026.03px;top:551px;font-size:14px;color:#555555;font-weight:400;font-family:"Liberation Sans";transform:scaleX(0.9737);transform-origin:0 0;'>LOOR</span><span class='t' style='left:1027.0px;top:571px;font-size:14px;color:#555555;font-weight:400;font-family:"Liberation Sans";transform:scaleX(1.0345);transform-origin:0 0;'>ANA</span><span class='t' style='left:1026.05px;top:591px;font-size:14px;color:#555555;font-weight:400;font-family:"Liberation Sans";transform:scaleX(0.9478);transform-origin:0 0;'>KAREN</span><span class='t' style='left:1087.06px;top:531px;font-size:14px;color:#555555;font-weight:400;font-family:"Liberation Sans";transform:scaleX(0.9375);transform-origin:0 0;'>RETENCIÓN DEL</span><span class='t' style='left:1087.0px;top:551px;font-size:14px;color:#555555;font-weight:400;font-family:"Liberation Sans";'>5 X 1000</span><span class='t' style='left:1087.02px;top:571px;font-size:14px;color:#555555;font-weight:400;font-family:"Liberation Sans";transform:scaleX(0.9825);transform-origin:0 0;'>COOTAD</span><span class='t' style='left:1219.55px;top:531px;font-size:14px;color:#555555;font-weight:400;font-family:"Liberation Sans";transform:scaleX(0.9471);transform-origin:0 0;'>MINISTERIO DE</span><span class='t' style='left:1219.52px;top:551px;font-size:14px;color:#555555;font-weight:400;font-family:"Liberation Sans";transform:scaleX(0.9770);transform-origin:0 0;'>ECONOMÍA Y</span><span class='t' style='left:1219.54px;top:571px;font-size:14px;color:#555555;font-weight:400;font-family:"Liberation Sans";transform:scaleX(0.9559);transform-origin:0 0;'>FINANZAS</span><svg style='position:absolute;left:9px;top:628px;' width='15' height='15' viewBox='0 0 15 15'><path d='M0.5 14.5L1.5 10.5L10.5 1.5L13.5 4.5L4.5 13.5Z' fill='#2196f3'/><path d='M11.5 0.5L14.5 3.5' stroke='#2196f3' stroke-width='1.5'/><path d='M0.5 14.5L2 11' stroke='#fff' stroke-width='0.6'/></svg><svg style='position:absolute;left:27px;top:628px;' width='15' height='15' viewBox='0 0 15 15'><circle cx='5.8' cy='5.8' r='4.4' fill='none' stroke='#2196f3' stroke-width='2.2'/><path d='M9 9L13.5 13.5' stroke='#2196f3' stroke-width='2.6' stroke-linecap='round'/></svg><div style='left:58px;top:630px;width:11px;height:11px;border:1px solid #767676;border-radius:2px;background:#fff'></div><span class='t' style='left:88.5px;top:628px;font-size:14px;color:#3a9cf4;font-weight:400;font-family:"Liberation Sans";transform:scaleX(1.0172);transform-origin:0 0;'>Asientos Contables ( 2)</span><span class='t' style='left:260.0px;top:628px;font-size:14px;color:#555555;font-weight:400;font-family:"Liberation Sans";transform:scaleX(1.0207);transform-origin:0 0;'>gad_vallehermos_2024</span><span class='t' style='left:445.47px;top:628px;font-size:14px;color:#555555;font-weight:400;font-family:"Liberation Sans";transform:scaleX(1.0333);transform-origin:0 0;'>176142</span><span class='t' style='left:510.05px;top:628px;font-size:14px;color:#555555;font-weight:400;font-family:"Liberation Sans";transform:scaleX(0.9516);transform-origin:0 0;'>Pago</span><div style='left:595px;top:631px;width:11px;height:11px;border:1px solid #d0d0d0;border-radius:1px;background:#fff'></div><span class='t' style='left:661.5px;top:628px;font-size:14px;color:#555555;font-weight:400;font-family:"Liberation Sans";transform:scaleX(1.0294);transform-origin:0 0;'>001-367</span><span class='t' style='left:817.93px;top:628px;font-size:14px;color:#555555;font-weight:400;font-family:"Liberation Sans";transform:scaleX(1.0725);transform-origin:0 0;'>18/09/2024</span><span class='t' style='left:947.59px;top:628px;font-size:14px;color:#555555;font-weight:400;font-family:"Liberation Sans";transform:scaleX(0.9141);transform-origin:0 0;'>PAREDES</span><span class='t' style='left:947.59px;top:648px;font-size:14px;color:#555555;font-weight:400;font-family:"Liberation Sans";transform:scaleX(0.9136);transform-origin:0 0;'>PERRAZO</span><span class='t' style='left:948.5px;top:668px;font-size:14px;color:#555555;font-weight:400;font-family:"Liberation Sans";transform:scaleX(0.9512);transform-origin:0 0;'>JAIME</span><span class='t' style='left:947.54px;top:688px;font-size:14px;color:#555555;font-weight:400;font-family:"Liberation Sans";transform:scaleX(0.9571);transform-origin:0 0;'>PATRICIO</span><span class='t' style='left:1026.09px;top:628px;font-size:14px;color:#555555;font-weight:400;font-family:"Liberation Sans";transform:scaleX(0.9079);transform-origin:0 0;'>SOSA</span><span class='t' style='left:1026.03px;top:648px;font-size:14px;color:#555555;font-weight:400;font-family:"Liberation Sans";transform:scaleX(0.9737);transform-origin:0 0;'>LOOR</span><span class='t' style='left:1027.0px;top:668px;font-size:14px;color:#555555;font-weight:400;font-family:"Liberation Sans";transform:scaleX(1.0345);transform-origin:0 0;'>ANA</span><span class='t' style='left:1026.05px;top:688px;font-size:14px;color:#555555;font-weight:400;font-family:"Liberation Sans";transform:scaleX(0.9478);transform-origin:0 0;'>KAREN</span><span class='t' style='left:1088.0px;top:628px;font-size:14px;color:#555555;font-weight:400;font-family:"Liberation Sans";transform:scaleX(0.9157);transform-origin:0 0;'>TERAPEUTA</span><span class='t' style='left:1087.04px;top:648px;font-size:14px;color:#555555;font-weight:400;font-family:"Liberation Sans";transform:scaleX(0.9650);transform-origin:0 0;'>OCUPACIONAL</span><span class='t' style='left:1087.04px;top:668px;font-size:14px;color:#555555;font-weight:400;font-family:"Liberation Sans";transform:scaleX(0.9615);transform-origin:0 0;'>DEL CONVENIO</span><span class='t' style='left:1087.05px;top:688px;font-size:14px;color:#555555;font-weight:400;font-family:"Liberation Sans";transform:scaleX(0.9545);transform-origin:0 0;'>MIES</span><span class='t' style='left:1219.55px;top:628px;font-size:14px;color:#555555;font-weight:400;font-family:"Liberation Sans";transform:scaleX(0.9474);transform-origin:0 0;'>CEDEÑO ORDOÑEZ</span><span class='t' style='left:1219.55px;top:648px;font-size:14px;color:#555555;font-weight:400;font-family:"Liberation Sans";transform:scaleX(0.9516);transform-origin:0 0;'>ISRAEL DAVID</span><div style='left:1349px;top:121px;width:17px;height:582px;background:#f1f1f1'></div><svg style='position:absolute;left:1353px;top:127px;' width='9' height='6' viewBox='0 0 9 6'><path d='M0.5 5.5L4.5 1L8.5 5.5Z' fill='#a3a3a3'/></svg><div style='left:1351px;top:138px;width:13px;height:128px;background:#c1c1c1'></div><svg style='position:absolute;left:1353px;top:691px;' width='9' height='6' viewBox='0 0 9 6'><path d='M0.5 0.5L4.5 5L8.5 0.5Z' fill='#505050'/></svg><div style='left:0px;top:703px;width:1349px;height:16px;background:#f1f1f1'></div><svg style='position:absolute;left:5px;top:707px;' width='6' height='9' viewBox='0 0 6 9'><path d='M5.5 0.5L1 4.5L5.5 8.5Z' fill='#a3a3a3'/></svg><div style='left:17px;top:705px;width:705px;height:13px;background:#c1c1c1'></div><svg style='position:absolute;left:1338px;top:707px;' width='6' height='9' viewBox='0 0 6 9'><path d='M0.5 0.5L5 4.5L0.5 8.5Z' fill='#505050'/></svg><div style='left:1349px;top:703px;width:17px;height:16px;background:#dcdcdc'></div><div style='left:0px;top:719px;width:1366px;height:1px;background:#f4f4f4'></div><div style='left:0px;top:720px;width:1366px;height:48px;background:#1f1f1f'></div><svg style='position:absolute;left:18px;top:726px;' width='32' height='30' viewBox='0 0 32 30'><defs><linearGradient id='sun' x1='0' y1='0' x2='1' y2='1'><stop offset='0' stop-color='#ffd000'/><stop offset='1' stop-color='#f06000'/></linearGradient></defs><circle cx='14' cy='18' r='10.2' fill='url(#sun)'/><g stroke='#f3e6b0' stroke-width='1.6' stroke-linecap='round'><path d='M7 11.5H9.5M7.5 16H22M2.5 20H14M17 20H21M2.5 24H21'/></g><circle cx='21' cy='8.5' r='8' fill='#f59aae'/><path d='M20.3 5.2L22 4.3V12.5' fill='none' stroke='#111' stroke-width='1.2'/></svg><svg style='position:absolute;left:342px;top:733px;' width='23' height='23' viewBox='0 0 23 23'><defs><linearGradient id='win' x1='0' y1='0' x2='1' y2='1'><stop offset='0' stop-color='#5fd8fb'/><stop offset='1' stop-color='#1c9de0'/></linearGradient></defs><g fill='url(#win)'><rect x='0' y='0' width='11' height='11'/><rect x='12' y='0' width='11' height='11'/><rect x='0' y='12' width='11' height='11'/><rect x='12' y='12' width='11' height='11'/></g></svg><svg style='position:absolute;left:387px;top:733px;' width='23' height='24' viewBox='0 0 23 24'><circle cx='9.5' cy='9.5' r='7.5' fill='none' stroke='#dedede' stroke-width='2.4'/><path d='M15 15L21.5 21.5' stroke='#dedede' stroke-width='2.6' stroke-linecap='round'/></svg><svg style='position:absolute;left:430px;top:733px;' width='25' height='23' viewBox='0 0 25 23'><rect x='0.5' y='8' width='15' height='14' rx='2' fill='#5a5a5a'/><rect x='7.5' y='0.5' width='17' height='15' rx='2' fill='#e8e8e8'/><rect x='7.5' y='8' width='8' height='7.5' fill='#9a9a9a'/></svg><svg style='position:absolute;left:473px;top:732px;' width='25' height='25' viewBox='0 0 25 25'><defs><linearGradient id='mt' x1='0' y1='0' x2='1' y2='1'><stop offset='0' stop-color='#8f7cf2'/><stop offset='1' stop-color='#4f58c8'/></linearGradient></defs><path d='M12.5 1A11.5 11.5 0 1 1 6 22L1 24L3 19A11.5 11.5 0 0 1 12.5 1Z' fill='url(#mt)'/><rect x='6.5' y='8.5' width='9' height='8' rx='1.5' fill='#fff'/><path d='M15.5 11L19 9V16L15.5 14Z' fill='#fff'/></svg><svg style='position:absolute;left:519px;top:733px;' width='23' height='22' viewBox='0 0 23 22'><defs><linearGradient id='cp1' x1='0' y1='0' x2='0' y2='1'><stop offset='0' stop-color='#1aa8f5'/><stop offset='.55' stop-color='#4cc46a'/><stop offset='1' stop-color='#f5d000'/></linearGradient><linearGradient id='cp2' x1='0' y1='0' x2='0' y2='1'><stop offset='0' stop-color='#a35af0'/><stop offset='.5' stop-color='#f0559a'/><stop offset='1' stop-color='#ffa040'/></linearGradient></defs><path d='M5 0.5H12.5Q16 0.5 16.5 3L17 5L13.5 14Q12.5 15.8 10.5 15.8H2Q0 15.8 0.3 13.5L3 2.5Q3.5 0.5 5 0.5Z' fill='url(#cp1)'/><path d='M10.5 6H19.5Q22.3 6 21.7 8.5L19 19Q18.4 21.2 16 21.2H8.5Q6 21.2 6.2 19.2L6 16L8.5 8.3Q9.2 6 10.5 6Z' fill='url(#cp2)'/><path d='M9.5 7.2H13.6L11.3 15H7.3Z' fill='#1f1f1f' opacity='.85'/></svg><svg style='position:absolute;left:562px;top:732px;' width='24' height='24' viewBox='0 0 24 24'><rect width='24' height='24' fill='#e84a1c'/><path d='M5 9Q7.5 5.8 9.8 6.8L10.6 15.5L9.3 21.5L3.8 20.2Q3 13 5 9Z' fill='#fff'/><path d='M11.5 1.8L18.2 3Q18.5 12 16.2 16.8L12.6 18.5L11.8 11Z' fill='#fff'/></svg><svg style='position:absolute;left:605px;top:732px;' width='25' height='24' viewBox='0 0 25 24'><circle cx='14.5' cy='4.5' r='3.5' fill='#7b83eb'/><circle cx='21' cy='6' r='2.6' fill='#5059c9'/><rect x='17' y='10' width='8' height='10' rx='4' fill='#5059c9'/><rect x='8' y='9' width='12' height='13' rx='5' fill='#7b83eb'/><rect x='0.5' y='6.5' width='12' height='12' rx='1.5' fill='#4b53bc'/><path d='M3.5 9.5H9.5M6.5 9.5V16' stroke='#fff' stroke-width='1.8'/></svg><svg style='position:absolute;left:649px;top:731px;' width='26' height='25' viewBox='0 0 26 25'><path d='M0 4Q0 2 2 2H9L12 5H24Q26 5 26 7V22Q26 24 24 24H2Q0 24 0 22Z' fill='#e8b600'/><path d='M0 8H26V22Q26 24 24 24H2Q0 24 0 22Z' fill='#ffd24c'/><rect x='7' y='16' width='12' height='8' rx='2' fill='#1b6fc2'/></svg><div style='left:659px;top:760px;width:6px;height:2px;background:#9a9a9a;border-radius:1px'></div><svg style='position:absolute;left:693px;top:732px;' width='26' height='24' viewBox='0 0 26 24'><rect x='7' y='0' width='19' height='24' rx='2' fill='#21a366'/><rect x='7' y='8' width='19' height='8' fill='#107c41'/><rect x='16' y='0' width='10' height='8' fill='#33c481'/><rect x='16' y='16' width='10' height='8' fill='#185c37'/><rect x='0.5' y='5' width='13' height='14' rx='1.5' fill='#107c41'/><path d='M4 8.5L10 15.5M10 8.5L4 15.5' stroke='#fff' stroke-width='1.7'/></svg><div style='left:703px;top:760px;width:6px;height:2px;background:#9a9a9a;border-radius:1px'></div><svg style='position:absolute;left:738px;top:732px;' width='24' height='24' viewBox='0 0 24 24'><defs><linearGradient id='ed' x1='0.9' y1='0.15' x2='0.2' y2='0.95'><stop offset='0' stop-color='#5ad45a'/><stop offset='.45' stop-color='#25b0e0'/><stop offset='.75' stop-color='#168ad8'/><stop offset='1' stop-color='#0f5aa8'/></linearGradient><linearGradient id='ed2' x1='0' y1='0' x2='1' y2='1'><stop offset='0' stop-color='#1a7fd4'/><stop offset='1' stop-color='#0b4f9a'/></linearGradient></defs><circle cx='12' cy='12' r='11.6' fill='url(#ed)'/><path d='M1.2 13.5Q1.5 7.5 7.5 6.8Q12 6.6 13.5 9.5Q10 8.5 8 11Q6 14.5 9 18.5Q12 22 17 22Q20 21 22.5 17.5Q20 23.6 12 23.6Q3 23 1.2 13.5Z' fill='url(#ed2)'/><path d='M8.4 14Q8.4 10.2 12 9.6Q15.6 9.4 16.6 12.3Q16 14.6 13.2 14.9Q10.5 15.1 8.4 14Z' fill='#1f1f1f'/><path d='M23.6 13.2Q22.5 16.5 18.5 17Q14.5 17.3 12.6 15.2L13.5 14.8Q16.5 15 23.6 12Z' fill='#1f1f1f'/></svg><svg style='position:absolute;left:781px;top:732px;' width='26' height='24' viewBox='0 0 26 24'><rect x='7' y='0' width='19' height='24' rx='2' fill='#41a5ee'/><rect x='7' y='6' width='19' height='6' fill='#2b7cd3'/><rect x='7' y='12' width='19' height='6' fill='#185abd'/><rect x='7' y='18' width='19' height='6' rx='2' fill='#103f91'/><rect x='0.5' y='5' width='13' height='14' rx='1.5' fill='#185abd'/><path d='M3 8.5L4.8 15.5L7 10L9.2 15.5L11 8.5' fill='none' stroke='#fff' stroke-width='1.5'/></svg><svg style='position:absolute;left:826px;top:731px;' width='24' height='25' viewBox='0 0 24 25'><defs><radialGradient id='ff' cx='.75' cy='.2' r='.95'><stop offset='0' stop-color='#ffe040'/><stop offset='.35' stop-color='#ff9a2a'/><stop offset='.65' stop-color='#ff4a3a'/><stop offset='1' stop-color='#e0208a'/></radialGradient><radialGradient id='fg' cx='.4' cy='.3'><stop offset='0' stop-color='#b25ae8'/><stop offset='1' stop-color='#6a3ad8'/></radialGradient></defs><path d='M12 3.2Q15.5 3 17 1Q18 4.5 20.5 6.5Q23.5 10 23 14.5Q22 22.5 12 24Q2 23.5 1 14Q1 10.5 3 8Q3 10 4.5 10.5Q6 5 12 3.2Z' fill='url(#ff)'/><circle cx='12' cy='12.6' r='5.2' fill='url(#fg)'/><path d='M3.5 10.8Q6.5 7.8 10 9.6Q12.5 11 16 10.3Q13.5 8.5 11.5 8Q8 7 5 8.5Z' fill='#ffa030'/><path d='M7 13Q9.5 16.5 13.5 15.8Q11 17.5 8.5 16.6Q6.5 15.5 7 13Z' fill='#ff6a30' opacity='.8'/></svg><svg style='position:absolute;left:870px;top:732px;' width='24' height='24' viewBox='0 0 24 24'><circle cx='12' cy='12' r='11.5' fill='#db4437'/><path d='M12 12L22 6.3A11.5 11.5 0 0 1 12 23.5Z' fill='#ffcd40'/><path d='M12 12L12 23.5A11.5 11.5 0 0 1 2 6.3Z' fill='#0f9d58'/><path d='M12 12L2 6.3A11.5 11.5 0 0 1 22 6.3Z' fill='#db4437'/><circle cx='12' cy='12' r='5.3' fill='#fff'/><circle cx='12' cy='12' r='4.2' fill='#1a73e8'/></svg><svg style='position:absolute;left:914px;top:732px;' width='24' height='24' viewBox='0 0 24 24'><circle cx='12' cy='12' r='11.5' fill='#1ed760'/><g fill='none' stroke='#111' stroke-linecap='round'><path d='M5.5 8.5Q12 6.5 18.5 9.5' stroke-width='2.2'/><path d='M6 12.3Q12 10.8 17.5 13.2' stroke-width='1.9'/><path d='M6.5 15.8Q11.5 14.8 16.5 16.8' stroke-width='1.6'/></g></svg><div style='left:923px;top:760px;width:6px;height:2px;background:#9a9a9a;border-radius:1px'></div><div style='left:950px;top:724px;width:40px;height:39px;background:#2c2c2c;border-radius:4px'></div><svg style='position:absolute;left:958px;top:732px;' width='24' height='24' viewBox='0 0 24 24'><circle cx='12' cy='12' r='11.5' fill='#db4437'/><path d='M12 12L22 6.3A11.5 11.5 0 0 1 12 23.5Z' fill='#ffcd40'/><path d='M12 12L12 23.5A11.5 11.5 0 0 1 2 6.3Z' fill='#0f9d58'/><path d='M12 12L2 6.3A11.5 11.5 0 0 1 22 6.3Z' fill='#db4437'/><circle cx='12' cy='12' r='5.3' fill='#fff'/><circle cx='12' cy='12' r='4.2' fill='#1a73e8'/></svg><svg style='position:absolute;left:971px;top:727px;' width='16' height='16' viewBox='0 0 16 16'><circle cx='8' cy='8' r='8' fill='#dcdce0'/><path d='M3.5 3L6 6.5L8 4.5L10 6.5L12.5 3L12 9.5L9.5 13.5H6.5L4 9.5Z' fill='#5a5a62'/><path d='M4 4.5L6.5 7M12 4.5L9.5 7' stroke='#2860c0' stroke-width='1.2'/><path d='M6 10H10M6.5 12H9.5' stroke='#e0e0e0' stroke-width='0.6'/></svg><div style='left:962px;top:760px;width:16px;height:3px;background:#4cc2ff;border-radius:2px'></div><svg style='position:absolute;left:1002px;top:732px;' width='24' height='24' viewBox='0 0 24 24'><defs><linearGradient id='jv' x1='0' y1='0' x2='0' y2='1'><stop offset='0' stop-color='#eef0f4'/><stop offset='1' stop-color='#d4d8de'/></linearGradient><radialGradient id='jb' cx='.4' cy='.4'><stop offset='0' stop-color='#ffffff'/><stop offset='.7' stop-color='#e6e6e6'/><stop offset='1' stop-color='#9a9a9a'/></radialGradient></defs><rect x='0.5' y='0.5' width='23' height='23' rx='1' fill='url(#jv)' stroke='#8fa8c0' stroke-width='0.8'/><path d='M6 21.5Q5 15 8 11Q10.5 8 14 9Q18 11 18.5 15Q19 19 18 21.5Q15 20.5 12 21.5Q9 20.5 6 21.5Z' fill='url(#jb)'/><path d='M8 11.5L11.5 1.5L15.5 10Q12 9 8 11.5Z' fill='#2a2a2a'/><circle cx='12.7' cy='9.8' r='2.9' fill='#e02828'/><path d='M7 14Q4 14 2 15.5' stroke='#555' stroke-width='1.4' fill='none'/><ellipse cx='3.2' cy='14.6' rx='2.2' ry='1.2' fill='#9cc4e0'/><path d='M18 13L21 10.5V8' stroke='#444' stroke-width='1.3' fill='none'/></svg><div style='left:1011px;top:760px;width:6px;height:2px;background:#9a9a9a;border-radius:1px'></div><svg style='position:absolute;left:1137px;top:740px;' width='12' height='8' viewBox='0 0 12 8'><path d='M1 7L6 2L11 7' fill='none' stroke='#fff' stroke-width='1.5'/></svg><span class='t' style='left:1170.6px;top:731px;font-size:11px;color:#fff;font-weight:400;font-family:"Liberation Sans";transform:scaleX(0.9048);transform-origin:0 0;'>ESP</span><span class='t' style='left:1169.42px;top:747px;font-size:11px;color:#fff;font-weight:400;font-family:"Liberation Sans";transform:scaleX(1.0750);transform-origin:0 0;'>LAA</span><svg style='position:absolute;left:1208px;top:733px;' width='22' height='22' viewBox='0 0 22 22'><g fill='none' stroke='#fff' stroke-width='1.25'><path d='M14.5 3.6H5Q3.6 3.6 3.6 5V14.2Q3.6 15.6 5 15.6H14.5'/><path d='M6 19.2H14.5M8.3 15.6V19.2M12.2 15.6V19.2'/><rect x='14.6' y='3.4' width='3.8' height='6.4' rx='0.9'/><path d='M14.6 5.2H18.4M16.5 9.8V19.6'/></g></svg><svg style='position:absolute;left:1232px;top:733px;' width='22' height='22' viewBox='0 0 22 22'><path d='M3.6 8.2H6.4L9.8 5.4V16.6L6.4 13.8H3.6Z' fill='none' stroke='#fff' stroke-width='1.25' stroke-linejoin='round'/><path d='M11.8 9.2Q12.8 11 11.8 12.8' fill='none' stroke='#fff' stroke-width='1.2'/><path d='M14 7Q16 11 14 15' fill='none' stroke='#6a6a6a' stroke-width='1.2'/><path d='M16.4 5Q19.4 11 16.4 17' fill='none' stroke='#5a5a5a' stroke-width='1.2'/></svg><span class='t' style='left:1294.03px;top:730px;font-size:12px;color:#fff;font-weight:400;font-family:"Liberation Sans";transform:scaleX(0.9655);transform-origin:0 0;'>12:22</span><span class='t' style='left:1266.93px;top:746px;font-size:12px;color:#fff;font-weight:400;font-family:"Liberation Sans";transform:scaleX(1.0725);transform-origin:0 0;'>5/11/2024</span><svg style='position:absolute;left:1331px;top:737px;' width='15' height='16' viewBox='0 0 15 16'><path d='M7.5 1Q12.5 1 12.5 7V10.5L14.5 13H0.5L2.5 10.5V7Q2.5 1 7.5 1Z' fill='#8fdcf8'/><path d='M5.5 14Q7.5 16.5 9.5 14Z' fill='#8fdcf8'/></svg>
</body></html>
